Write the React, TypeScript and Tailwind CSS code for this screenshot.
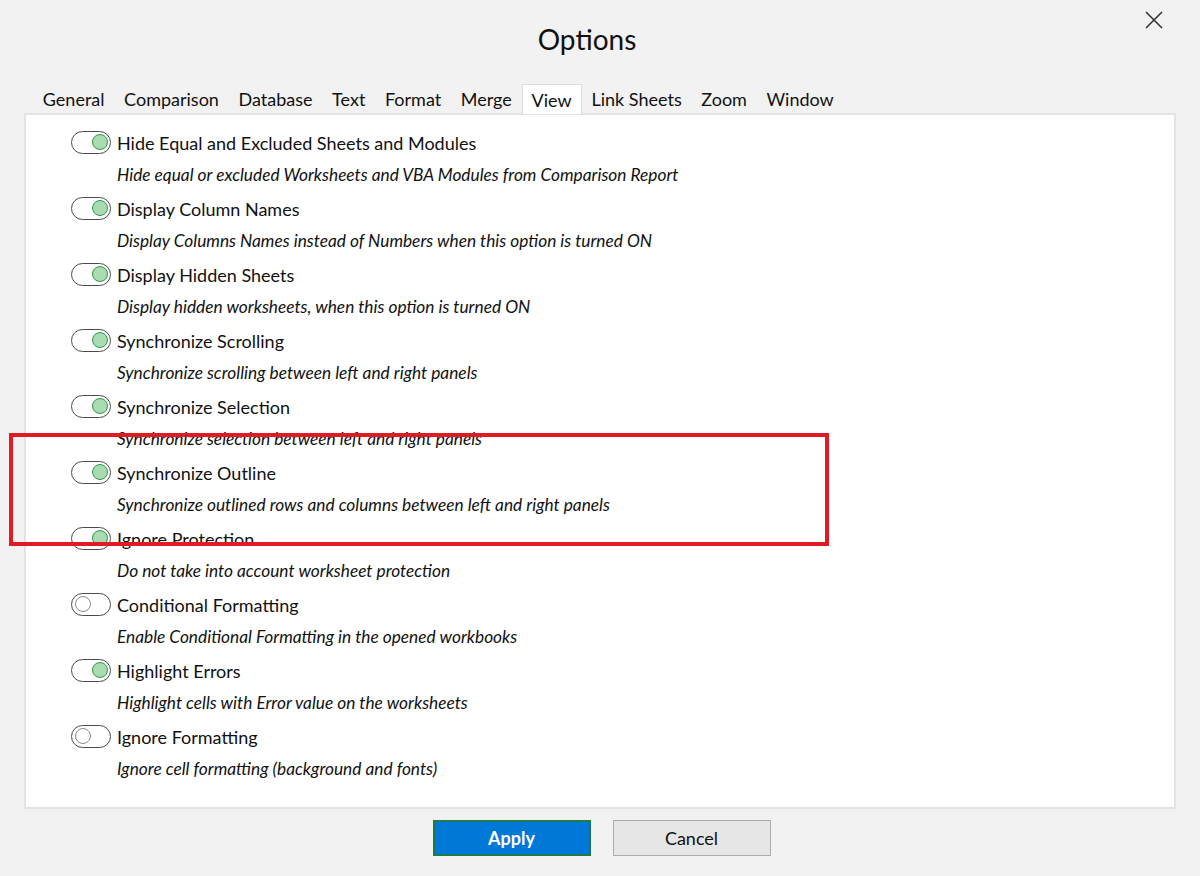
import React from 'react';

const tabs = ['General', 'Comparison', 'Database', 'Text', 'Format', 'Merge', 'View', 'Link Sheets', 'Zoom', 'Window'];

const options = [
  { on: true, title: 'Hide Equal and Excluded Sheets and Modules', desc: 'Hide equal or excluded Worksheets and VBA Modules from Comparison Report' },
  { on: true, title: 'Display Column Names', desc: 'Display Columns Names instead of Numbers when this option is turned ON' },
  { on: true, title: 'Display Hidden Sheets', desc: 'Display hidden worksheets, when this option is turned ON' },
  { on: true, title: 'Synchronize Scrolling', desc: 'Synchronize scrolling between left and right panels' },
  { on: true, title: 'Synchronize Selection', desc: 'Synchronize selection between left and right panels' },
  { on: true, title: 'Synchronize Outline', desc: 'Synchronize outlined rows and columns between left and right panels' },
  { on: true, title: 'Ignore Protection', desc: 'Do not take into account worksheet protection' },
  { on: false, title: 'Conditional Formatting', desc: 'Enable Conditional Formatting in the opened workbooks' },
  { on: true, title: 'Highlight Errors', desc: 'Highlight cells with Error value on the worksheets' },
  { on: false, title: 'Ignore Formatting', desc: 'Ignore cell formatting (background and fonts)' },
];

const Toggle: React.FC<{ on: boolean }> = ({ on }) => (
  <div className="relative h-[23px] w-[40px] shrink-0 rounded-full border-[1.5px] border-[#4a4a4a] bg-white">
    {on ? (
      <span className="absolute right-[2px] top-[2px] h-[16px] w-[16px] rounded-full border-[1.5px] border-[#2e9a4c] bg-[#a9dbb3]" />
    ) : (
      <span className="absolute left-[3px] top-[2px] h-[16px] w-[16px] rounded-full border-[1.5px] border-[#8a8a8a] bg-white" />
    )}
  </div>
);

export default function App() {
  return (
    <div
      className="relative flex h-[876px] w-[1200px] flex-col bg-[#f2f2f2] text-[#111]"
      style={{ fontFamily: 'Lato, "Open Sans", sans-serif' }}
    >
      <div className="relative flex h-[84px] justify-center pt-[19px] pr-[26px]">
        <h1 className="text-[28px] leading-[40px] text-[#111]">Options</h1>
        <button className="absolute right-[36px] top-[10px] text-[#333]">
          <svg width="20" height="20" viewBox="0 0 20 20" stroke="currentColor" strokeWidth="1.6">
            <path d="M2 2 L18 18 M18 2 L2 18" />
          </svg>
        </button>
      </div>

      <div className="flex pl-[33px] text-[18px]">
        {tabs.map((t) =>
          t === 'View' ? (
            <div key={t} className="relative -mb-[1px] z-10 border border-b-0 border-[#dcdcdc] bg-white px-[9px] pt-[1px] h-[30px] leading-[28px]">
              {t}
            </div>
          ) : (
            <div key={t} className="px-[9.8px] pt-[1px] h-[29px] leading-[28px]">
              {t}
            </div>
          )
        )}
      </div>

      <div className="mx-[24px] h-[696px] border-2 border-[#e3e3e3] bg-white pl-[45px] pt-[16px]">
        {options.map((o) => (
          <div key={o.title} className="h-[66px]">
            <div className="flex items-center gap-[6px] h-[23px]">
              <Toggle on={o.on} />
              <span className="text-[18px] leading-[22px]">{o.title}</span>
            </div>
            <div className="ml-[46px] mt-[11px] text-[17.3px] italic leading-[20px] text-[#111]">{o.desc}</div>
          </div>
        ))}
      </div>

      <div className="flex justify-center gap-[22px] pt-[11px] pl-[3px]">
        <button className="h-[36px] w-[158px] border-2 border-[#1d7a4c] bg-[#0078d7] text-[18px] font-bold text-white">
          Apply
        </button>
        <button className="h-[36px] w-[158px] border border-[#adadad] bg-[#e6e6e6] text-[18px] text-[#111]">
          Cancel
        </button>
      </div>

      <div className="pointer-events-none absolute left-[9px] top-[433px] h-[113px] w-[820px] border-[4px] border-[#e01b24]" />
    </div>
  );
}
